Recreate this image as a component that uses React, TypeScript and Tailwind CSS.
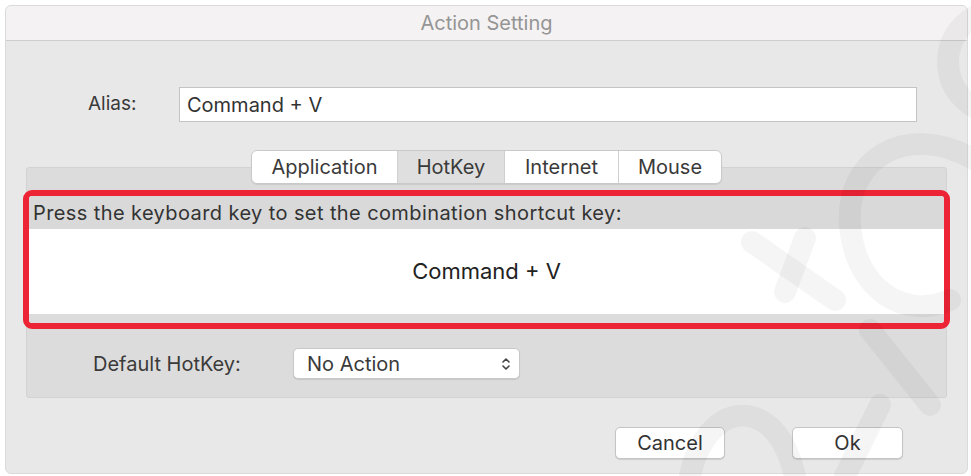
const font = { fontFamily: "Inter, 'Open Sans', 'Liberation Sans', sans-serif" };

const tabs = [
  { label: "Application", w: "w-[145px]" },
  { label: "HotKey", w: "w-[107px]" },
  { label: "Internet", w: "w-[114px]" },
  { label: "Mouse", w: "w-[103px]" },
];

function Chevrons() {
  return (
    <svg width="10" height="16" viewBox="0 0 10 16" fill="none" stroke="#444" strokeWidth="1.6" strokeLinecap="round" strokeLinejoin="round">
      <path d="M2 6 L5 3 L8 6" />
      <path d="M2 10 L5 13 L8 10" />
    </svg>
  );
}

// faint logo watermark stamped over the screenshot
function Watermark() {
  return (
    <svg
      className="absolute inset-0 pointer-events-none"
      width="971"
      height="476"
      viewBox="0 0 971 476"
      fill="none"
      stroke="#000"
      strokeOpacity="0.04"
      strokeWidth="22"
      strokeLinecap="round"
    >
      <circle cx="1000" cy="62" r="52" />
      <path d="M975 160 C905 120 845 160 850 225 C855 290 905 320 950 300" />
      <path d="M870 330 L930 405" />
      <path d="M752 242 L835 300" />
      <path d="M805 238 L785 292" />
      <path d="M690 476 C700 430 730 405 760 420 C780 430 790 455 795 476" />
      <path d="M845 476 L880 405" />
    </svg>
  );
}

export default function App() {
  return (
    <div className="relative w-[971px] h-[476px] bg-white pt-[5px] pl-[5px] text-[#3a3a3a]" style={font}>
      <div className="w-[963px] h-[469px] flex flex-col rounded-[6px] border border-[#dadada] overflow-hidden bg-[#e8e8e8]">
        {/* title bar */}
        <div className="h-[35px] shrink-0 flex items-center justify-center bg-[#f4f2f2] border-b border-[#cdcdcd] text-[20px] text-[#959595]">
          Action Setting
        </div>

        {/* alias */}
        <div className="mt-[46px] flex items-center pl-[82px]">
          <span className="text-[19px] w-[91px]">Alias:</span>
          <div className="w-[738px] h-[35px] bg-white border border-[#c4c4c4] flex items-center pl-[7px] text-[20px] text-[#333]">
            Command + V
          </div>
        </div>

        {/* tabs */}
        <div className="mt-[28px] pl-[245px] relative z-10 flex">
          <div className="flex h-[34px] rounded-[6px] border border-[#c9c9c9] bg-white overflow-hidden shadow-[0_1px_1px_rgba(0,0,0,0.08)] text-[20px]">
            {tabs.map((t, i) => (
              <div
                key={t.label}
                className={
                  t.w +
                  (i === 1
                    ? " flex items-center justify-center bg-[#dfdfdf] border-l border-[#d0d0d0]"
                    : i === 0
                      ? " flex items-center justify-center"
                      : " flex items-center justify-center border-l border-[#d0d0d0]")
                }
              >
                {t.label}
              </div>
            ))}
          </div>
        </div>

        {/* panel */}
        <div className="-mt-[17px] mx-[20px] h-[231px] bg-[#dcdcdc] border border-[#d2d2d2] rounded-[3px] flex flex-col">
          <div className="mt-[22px] -mx-[4px] h-[139px] border-[6px] border-[#ec2435] rounded-[9px] flex flex-col overflow-hidden">
            <div className="h-[33px] shrink-0 bg-[#d9d9d9] flex items-center pl-[4px] text-[20px] tracking-[0.4px] text-[#333]">
              Press the keyboard key to set the combination shortcut key:
            </div>
            <div className="flex-1 bg-white flex items-center justify-center text-[22px] text-[#222]">
              Command + V
            </div>
            <div className="h-[9px] shrink-0 bg-[#dcdcdc]" />
          </div>

          <div className="mt-[19px] flex items-center pl-[66px]">
            <span className="text-[20px] w-[200px]">Default HotKey:</span>
            <div className="w-[227px] h-[31px] bg-white rounded-[5px] border border-[#c8c8c8] shadow-[0_1px_1px_rgba(0,0,0,0.1)] flex items-center justify-between pl-[13px] pr-[8px] text-[20px]">
              <span>No Action</span>
              <Chevrons />
            </div>
          </div>
        </div>

        {/* buttons */}
        <div className="mt-[29px] flex justify-end gap-[67px] pr-[64px]">
          <button className="w-[110px] h-[32px] bg-white rounded-[5px] border border-[#c4c4c4] shadow-[0_1px_1px_rgba(0,0,0,0.12)] text-[20px] text-[#333]">
            Cancel
          </button>
          <button className="w-[111px] h-[32px] bg-white rounded-[5px] border border-[#c4c4c4] shadow-[0_1px_1px_rgba(0,0,0,0.12)] text-[20px] text-[#333]">
            Ok
          </button>
        </div>
      </div>
      <Watermark />
    </div>
  );
}
